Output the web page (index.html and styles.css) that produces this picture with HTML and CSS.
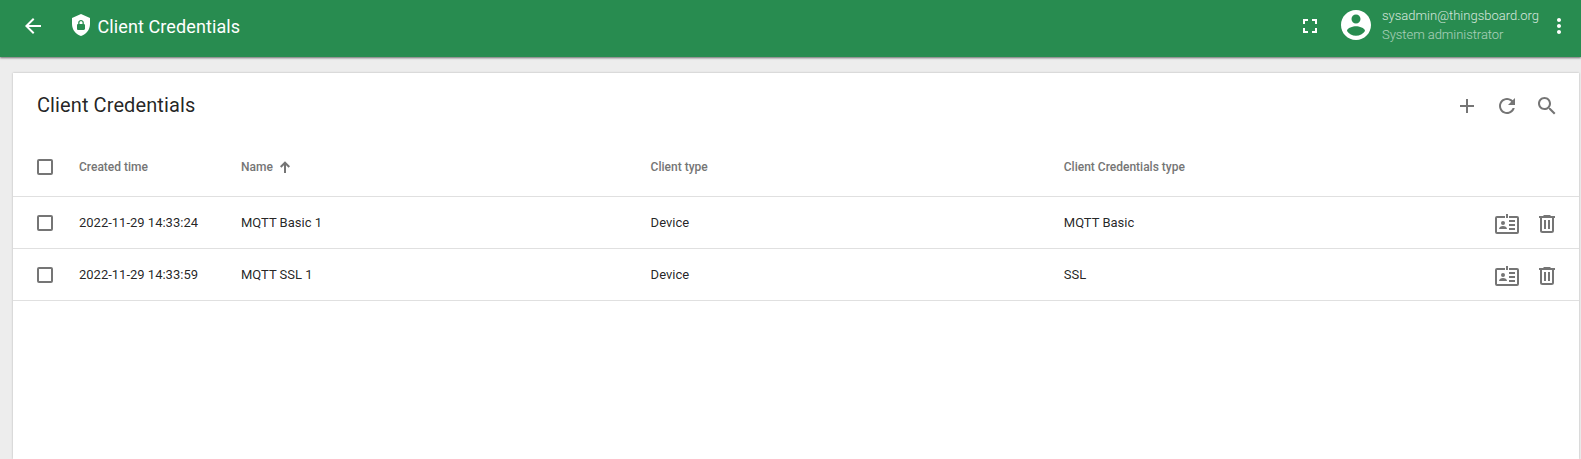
FILE: index.html
```html
<!DOCTYPE html>
<html lang="en">
<head>
<meta charset="utf-8">
<title>Client Credentials</title>
<link rel="stylesheet" href="styles.css">
</head>
<body>
<svg class="defs" width="0" height="0">
  <symbol id="badge" viewBox="0 0 24 24">
    <path d="M10 5H2a1 1 0 0 0-1 1v14a1 1 0 0 0 1 1h20a1 1 0 0 0 1-1V6a1 1 0 0 0-1-1h-8" fill="none" stroke="currentColor" stroke-width="2"/>
    <path d="M11 2h2v4h-2zM14 8h6v2h-6zM14 12h6v2h-6zM14 16h6v2h-6zM4 17c0-2 2-3 4-3s4 1 4 3z"/>
    <circle cx="8" cy="11" r="2"/>
  </symbol>
  <symbol id="trash" viewBox="0 0 24 24">
    <path d="M9 3h6l1 1h4v2H4V4h4z"/>
    <path d="M6 5v13.500A1.500 1.500 0 0 0 7.500 20h9a1.500 1.500 0 0 0 1.500-1.500V5" fill="none" stroke="currentColor" stroke-width="2"/>
    <path d="M9 8h2v9H9zM13 8h2v9h-2z"/>
  </symbol>
</svg>
<header class="toolbar">
  <svg class="icon back" viewBox="0 0 24 24"><path d="M20 11H7.830l5.590-5.590L12 4l-8 8 8 8 1.410-1.410L7.830 13H20v-2z"/></svg>
  <svg class="icon shield" viewBox="0 0 24 24"><path d="M12,1L3,5V11C3,16.55 6.84,21.74 12,23C17.16,21.74 21,16.55 21,11V5L12,1M12,7C13.4,7 14.8,8.1 14.8,9.5V11C15.4,11 16,11.6 16,12.3V15.8C16,16.4 15.4,17 14.7,17H9.2C8.6,17 8,16.4 8,15.7V12.2C8,11.6 8.6,11 9.2,11V9.5C9.2,8.1 10.6,7 12,7M12,8.2C11.2,8.2 10.5,8.7 10.5,9.5V11H13.5V9.5C13.5,8.7 12.8,8.2 12,8.2Z"/></svg>
  <h1 class="crumb">Client Credentials</h1>
  <svg class="icon fullscreen" viewBox="0 0 24 24"><path d="M7 14H5v5h5v-2H7v-3zm-2-4h2V7h3V5H5v5zm12 7h-3v2h5v-5h-2v3zM14 5v2h3v3h2V5h-5z"/></svg>
  <svg class="icon avatar" viewBox="0 0 24 24"><path d="M12 2C6.480 2 2 6.480 2 12s4.480 10 10 10 10-4.480 10-10S17.520 2 12 2zm0 3c1.660 0 3 1.340 3 3s-1.340 3-3 3-3-1.340-3-3 1.340-3 3-3zm0 14.200c-2.500 0-4.710-1.280-6-3.220.030-1.990 4-3.080 6-3.080 1.990 0 5.970 1.090 6 3.080-1.290 1.940-3.500 3.220-6 3.220z"/></svg>
  <div class="user">
    <span class="email">sysadmin@thingsboard.org</span>
    <span class="role">System administrator</span>
  </div>
  <svg class="icon more" viewBox="0 0 24 24"><path d="M12 8c1.100 0 2-.9 2-2s-.9-2-2-2-2 .9-2 2 .9 2 2 2zm0 2c-1.100 0-2 .9-2 2s.9 2 2 2 2-.9 2-2-.9-2-2-2zm0 6c-1.100 0-2 .9-2 2s.9 2 2 2 2-.9 2-2-.9-2-2-2z"/></svg>
</header>
<main class="card">
  <div class="card-head">
    <h2 class="card-title">Client Credentials</h2>
    <div class="actions">
      <svg class="icon" viewBox="0 0 24 24"><path d="M19 13h-6v6h-2v-6H5v-2h6V5h2v6h6v2z"/></svg>
      <svg class="icon" viewBox="0 0 24 24"><path d="M17.650 6.350C16.200 4.900 14.210 4 12 4c-4.420 0-7.990 3.580-7.990 8s3.570 8 7.990 8c3.730 0 6.840-2.550 7.730-6h-2.080c-.82 2.330-3.040 4-5.650 4-3.310 0-6-2.690-6-6s2.690-6 6-6c1.660 0 3.140.69 4.220 1.780L13 11h7V4l-2.350 2.350z"/></svg>
      <svg class="icon" viewBox="0 0 24 24"><path d="M15.500 14h-.79l-.28-.27C15.410 12.590 16 11.110 16 9.500 16 5.910 13.090 3 9.500 3S3 5.910 3 9.500 5.910 16 9.500 16c1.610 0 3.090-.59 4.230-1.570l.27.28v.79l5 4.990L20.490 19l-4.990-5zm-6 0C7.010 14 5 11.990 5 9.500S7.010 5 9.500 5 14 7.010 14 9.500 11.990 14 9.500 14z"/></svg>
    </div>
  </div>
  <div class="row head">
    <span class="check"></span>
    <span>Created time</span>
    <span class="sorted">Name <svg class="sort" viewBox="0 0 10 12"><path d="M5 12V1.700M.7 6L5 1.700 9.300 6" fill="none" stroke="currentColor" stroke-width="2"/></svg></span>
    <span>Client type</span>
    <span>Client Credentials type</span>
  </div>
  <div class="row">
    <span class="check"></span>
    <span>2022-11-29 14:33:24</span>
    <span>MQTT Basic 1</span>
    <span>Device</span>
    <span>MQTT Basic</span>
    <div class="actions"><svg class="icon"><use href="#badge"/></svg><svg class="icon"><use href="#trash"/></svg></div>
  </div>
  <div class="row">
    <span class="check"></span>
    <span>2022-11-29 14:33:59</span>
    <span>MQTT SSL 1</span>
    <span>Device</span>
    <span>SSL</span>
    <div class="actions"><svg class="icon"><use href="#badge"/></svg><svg class="icon"><use href="#trash"/></svg></div>
  </div>
</main>
</body>
</html>
```
FILE: styles.css
```css
* { box-sizing: border-box; }
body {
  margin: 0;
  height: 459px;
  overflow: hidden;
  display: flex;
  flex-direction: column;
  background: #ededed;
  color: rgba(0, 0, 0, .87);
  font-family: Roboto, "Liberation Sans", sans-serif;
}
.defs { display: none; }
.icon { display: block; width: 24px; height: 24px; flex: none; fill: currentColor; }
.toolbar {
  flex: none;
  display: flex;
  align-items: flex-start;
  height: 57px;
  padding: 14px 10px 0 21px;
  background: #288c50;
  color: #fff;
  box-shadow: 0 1px 2px rgba(0, 0, 0, .55);
}
.shield { margin: -1px 4.500px 0 24px; }
.crumb { margin: 0 auto 0 0; font-size: 18px; font-weight: 400; line-height: 25px; letter-spacing: .1px; }
.avatar { width: 36px; height: 36px; margin: -7px 8px 0 16px; }
.user { display: flex; flex-direction: column; width: 165px; margin-top: -8px; font-weight: 300; }
.email { font-size: 13px; line-height: 19px; opacity: .8; }
.role { font-size: 13px; line-height: 19px; letter-spacing: -.05px; opacity: .6; }
.card {
  flex: 1;
  margin: 16px 2px 0 13px;
  background: #fff;
  box-shadow: 0 0 2px rgba(0, 0, 0, .25);
}
.card-head { display: flex; justify-content: space-between; height: 67px; padding: 21px 20px 0 24px; }
.card-title { margin: 0; font-size: 20px; font-weight: 400; line-height: 23px; letter-spacing: .1px; }
.actions { display: flex; gap: 16px; color: #757575; }
.row {
  display: grid;
  grid-template-columns: 42px 162px 409.600px 413.200px 1fr auto;
  align-items: center;
  height: 52px;
  padding: 0 20px 0 24px;
  border-bottom: 1px solid #e0e0e0;
  font-size: 13px;
}
.row .actions { padding-top: 3px; }
.head { height: 57px; padding-bottom: 2px; color: #757575; font-size: 12px; font-weight: 500; }
.check { width: 16px; height: 16px; border: 2px solid #757575; border-radius: 2px; }
.sorted { display: flex; align-items: center; gap: 7px; }
.sort { width: 10px; height: 12px; }
```
